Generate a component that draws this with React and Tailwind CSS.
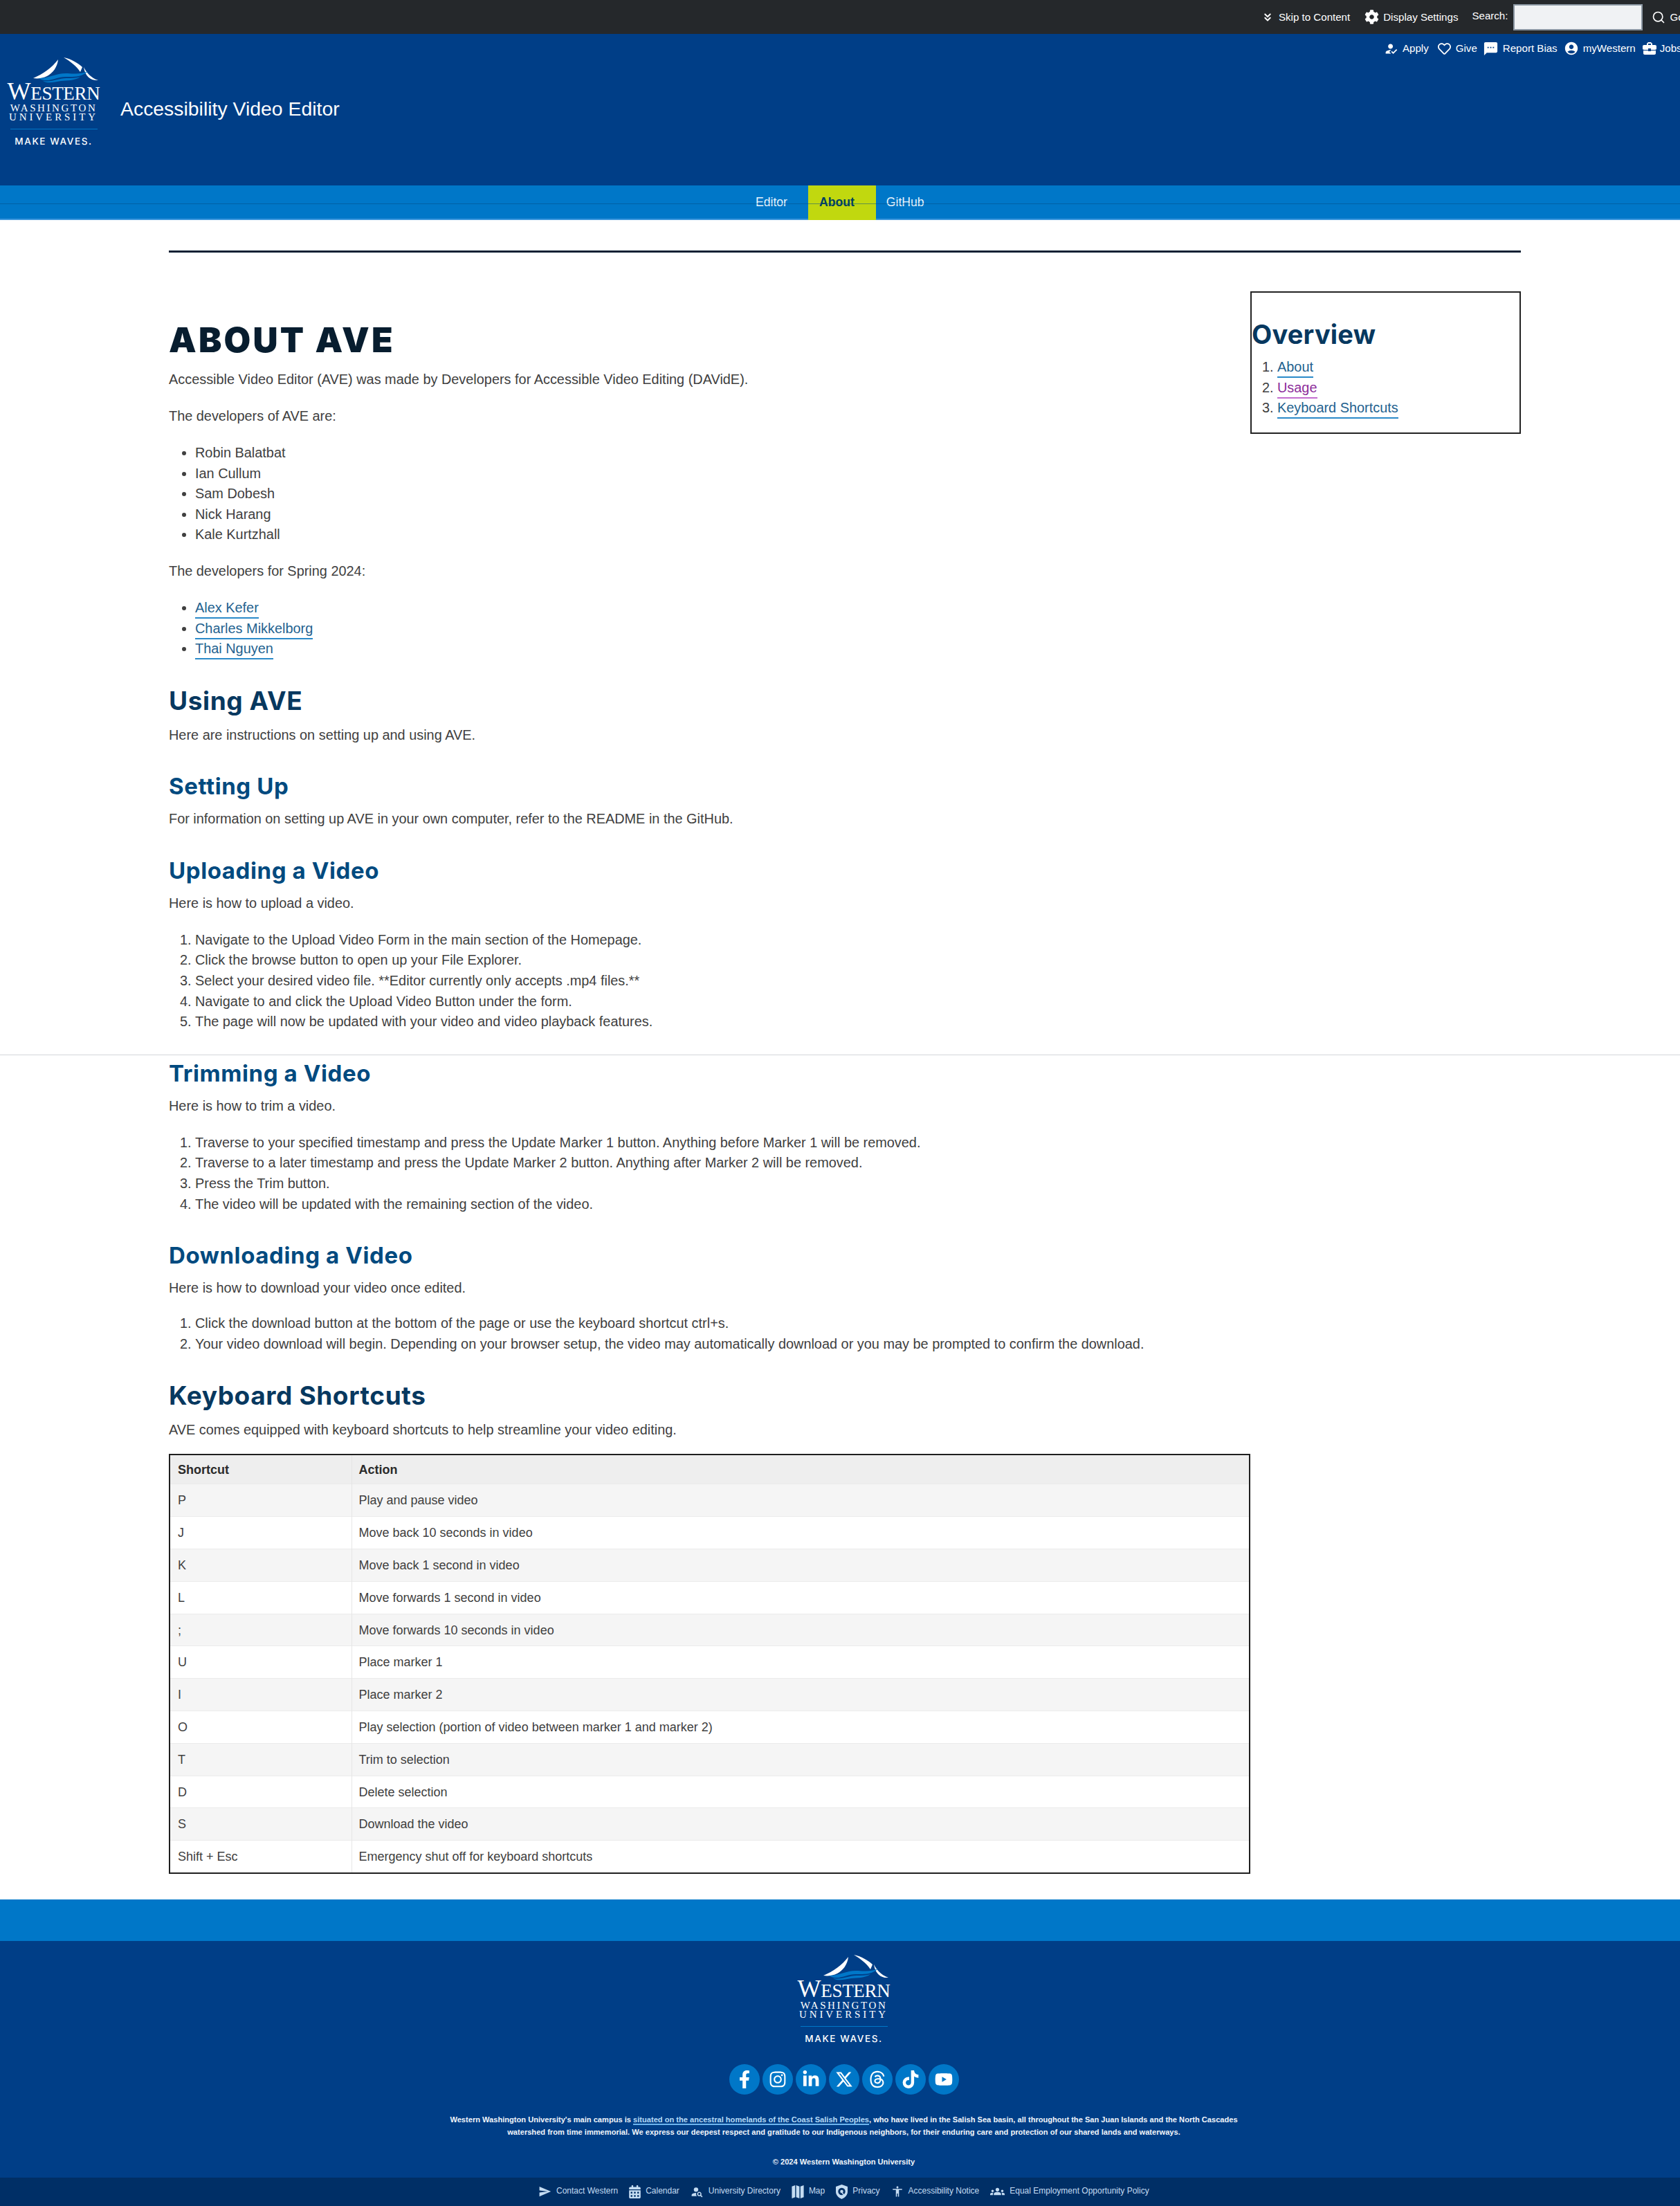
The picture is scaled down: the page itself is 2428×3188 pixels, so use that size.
import { ChevronsDown, Search } from 'lucide-react';
import { FaCog, FaRegHeart, FaFacebookF, FaInstagram, FaLinkedinIn, FaTiktok, FaYoutube, FaCalendarAlt } from 'react-icons/fa';
import { FaXTwitter, FaThreads } from 'react-icons/fa6';
import { MdHowToReg, MdSms, MdAccountCircle, MdBusinessCenter, MdSend, MdPersonSearch, MdAccessibility, MdGroups } from 'react-icons/md';

const shortcuts = [
    ['P', 'Play and pause video'],
    ['J', 'Move back 10 seconds in video'],
    ['K', 'Move back 1 second in video'],
    ['L', 'Move forwards 1 second in video'],
    [';', 'Move forwards 10 seconds in video'],
    ['U', 'Place marker 1'],
    ['I', 'Place marker 2'],
    ['O', 'Play selection (portion of video between marker 1 and marker 2)'],
    ['T', 'Trim to selection'],
    ['D', 'Delete selection'],
    ['S', 'Download the video'],
    ['Shift + Esc', 'Emergency shut off for keyboard shortcuts'],
];

const socials = [FaFacebookF, FaInstagram, FaLinkedinIn, FaXTwitter, FaThreads, FaTiktok, FaYoutube];

const PrivacyIcon = () => (
    <svg viewBox="0 0 18 22" className="w-[17px] h-[21px]" fill="currentColor">
        <path fillRule="evenodd" d="M9 0 L18 3 V11 C18 16 14 20 9 22 C4 20 0 16 0 11 V3 Z M9 5 A5.5 5.5 0 1 0 9 16 A5.5 5.5 0 1 0 9 5 Z" />
        <circle cx="9" cy="10.5" r="2.4" />
        <path d="M10 12 L14 16 L12.5 17 L9 13 Z" />
    </svg>
);

const MapIcon = () => (
    <svg viewBox="0 0 18 22" className="w-[18px] h-[21px]" fill="currentColor">
        <path d="M0 3 L5 1 V19 L0 21 Z" />
        <path d="M6.5 1 L11.5 3 V21 L6.5 19 Z" />
        <path d="M13 3 L18 1 V19 L13 21 Z" />
    </svg>
);

const footerLinks = [
    [MdSend, 'Contact Western', 'w-[19px] text-[24px]'],
    [FaCalendarAlt, 'Calendar', 'w-[17px] text-[19px]'],
    [MdPersonSearch, 'University Directory', 'w-[19px] text-[23px]'],
    [MapIcon, 'Map', 'w-[18px]'],
    [PrivacyIcon, 'Privacy', 'w-[17px]'],
    [MdAccessibility, 'Accessibility Notice', 'w-[18px] text-[26px]'],
    [MdGroups, 'Equal Employment Opportunity Policy', 'w-[21px] text-[26px]'],
];

const Logo = () => (
    <div className="w-[135px] flex flex-col items-center text-white font-['Liberation_Serif',serif]">
        <svg viewBox="0 0 135 37" className="w-[135px] h-[37px] block">
            <path fill="#fff" d="M38 30 C52 24 65 15 74 3 C73 14 66 23 58 27 C52 30 45 31 38 30Z" />
            <path fill="#fff" d="M82 0 C93 2 104 9 109 14 L106 21 C100 12 92 6 82 0Z" />
            <path fill="#fff" d="M111 14 C115 22 122 30 132 33 C122 34 113 28 111 14Z" />
            <path fill="#0077c8" d="M46 30 C62 30 72 22 88 23 C100 24 108 24 117 20 C108 29 96 28 84 28 C72 28 58 38 46 30Z" />
            <path fill="#0077c8" d="M52 34 C66 36 74 30 86 30 C92 30 100 30 106 28 C98 34 86 33 78 34 C68 36 58 38 52 34Z" />
        </svg>
        <div className="h-[28px] leading-[24px] whitespace-nowrap tracking-[-0.3px]">
            <span className="text-[36px]">W</span><span className="text-[27px]">ESTERN</span>
        </div>
        <div className="mt-[1px] h-[13px] leading-[14px] text-[15px] tracking-[2.6px] whitespace-nowrap">WASHINGTON</div>
        <div className="h-[13px] leading-[14px] text-[15px] tracking-[3.9px] whitespace-nowrap">UNIVERSITY</div>
        <div className="mt-[11px] w-[126px] h-[1px] bg-[#0077c8]"></div>
        <div className="mt-[9px] text-[13.5px] leading-[16px] tracking-[1.6px] font-medium font-['Inter',sans-serif] whitespace-nowrap">MAKE WAVES.</div>
    </div>
);

const P = ({ children }) => <p className="mb-[23.4px]">{children}</p>;

const H2 = ({ children }) => (
    <h2 className="mt-[37px] mb-[12px] text-[37px] leading-[46px] font-bold text-[#07385f] font-['Inter',sans-serif] tracking-[0.6px]">{children}</h2>
);

const H3 = ({ children }) => (
    <h3 className="mt-[38px] mb-[12px] text-[33px] leading-[42px] font-bold text-[#004a7f] font-['Inter',sans-serif] tracking-[0.6px]">{children}</h3>
);

const Link = ({ children, visited }) => (
    <a className={visited ? "text-[#8c2c9a] border-b-2 border-[#c46ccf] pb-[3px]" : "text-[#23628f] border-b-2 border-[#2a8ac9] pb-[3px]"}>{children}</a>
);

const Ol = ({ items, className = "mb-[23px]" }) => (
    <ol className={"list-decimal pl-[38px] " + className}>
        {items.map((item, key) => <li key={key}>{item}</li>)}
    </ol>
);

const Ul = ({ items }) => (
    <ul className="list-disc pl-[38px] mb-[23px]">
        {items.map((item, key) => <li key={key}>{item}</li>)}
    </ul>
);

const App = () => {
    return (
        <div className="relative w-[2428px] overflow-hidden bg-white text-[#404040] text-[19.9px] leading-[29.6px] font-['Liberation_Sans',Arial,sans-serif]">
            <div className="h-[49px] bg-[#25282b] text-white text-[15.1px] flex items-center pl-[1823px] whitespace-nowrap [&>*]:shrink-0">
                <ChevronsDown size={18} strokeWidth={2.5} className="mr-[7px]" />
                <span>Skip to Content</span>
                <FaCog className="ml-[21px] mr-[6px] text-[21px]" />
                <span>Display Settings</span>
                <span className="ml-[20px] -translate-y-[2px]">Search:</span>
                <div className="ml-[8px] w-[187px] h-[38px] bg-[#f0f2f4] border-2 border-[#8b97a3]"></div>
                <Search size={20} strokeWidth={2} className="ml-[13px]" />
                <span className="ml-[6px]">Go</span>
            </div>

            <header className="h-[219px] bg-[#003e87] text-white">
                <div className="h-[38px] flex items-center pl-[2000px] pt-[4px] text-[15.1px] whitespace-nowrap [&>*]:shrink-0">
                    <MdHowToReg className="text-[21px] mr-[6px]" />
                    <span>Apply</span>
                    <FaRegHeart className="text-[19px] ml-[13px] mr-[7px]" />
                    <span>Give</span>
                    <MdSms className="text-[23px] ml-[8px] mr-[6px]" />
                    <span>Report Bias</span>
                    <MdAccountCircle className="text-[22px] ml-[9px] mr-[6px]" />
                    <span>myWestern</span>
                    <MdBusinessCenter className="text-[24px] ml-[8px] mr-[3px]" />
                    <span>Jobs</span>
                </div>
                <div className="flex items-start pl-[10px] -mt-[4px]">
                    <Logo />
                    <div className="ml-[29px] mt-[50px] text-[28.4px] leading-[48px]">Accessibility Video Editor</div>
                </div>
            </header>

            <nav className="relative h-[50px] bg-[#0077c8] border-b-2 border-[#3d97dc] flex pl-[1077px] text-[17.6px] text-white">
                <a className="pl-[15px] pr-[30px] leading-[48px] text-[#e8f4fc]">Editor</a>
                <a className="pl-[16px] pr-[31px] leading-[48px] h-[50px] bg-[#c1d80f] text-[#003f5f] font-bold">About</a>
                <a className="pl-[15px] leading-[48px] text-[#e8f4fc]">GitHub</a>
                <div className="absolute left-0 right-0 top-[26px] h-[1px] bg-[#004a82]/50"></div>
            </nav>

            <main className="ml-[244px] w-[1954px] pt-[44px]">
                <div className="h-[3px] bg-[#0d2033]"></div>
                <div className="flex mt-[56px]">
                    <div className="w-[1563px] pt-[40px]">
                        <h1 className="mb-[13px] text-[50px] leading-[60px] font-black text-[#071d2f] font-['Inter',sans-serif] tracking-[3.2px]">ABOUT AVE</h1>
                        <P>Accessible Video Editor (AVE) was made by Developers for Accessible Video Editing (DAVidE).</P>
                        <P>The developers of AVE are:</P>
                        <Ul items={['Robin Balatbat', 'Ian Cullum', 'Sam Dobesh', 'Nick Harang', 'Kale Kurtzhall']} />
                        <P>The developers for Spring 2024:</P>
                        <Ul items={[<Link>Alex Kefer</Link>, <Link>Charles Mikkelborg</Link>, <Link>Thai Nguyen</Link>]} />

                        <H2>Using AVE</H2>
                        <P>Here are instructions on setting up and using AVE.</P>

                        <H3>Setting Up</H3>
                        <P>For information on setting up AVE in your own computer, refer to the README in the GitHub.</P>

                        <H3>Uploading a Video</H3>
                        <P>Here is how to upload a video.</P>
                        <Ol className="mb-[21px]" items={[
                            'Navigate to the Upload Video Form in the main section of the Homepage.',
                            'Click the browse button to open up your File Explorer.',
                            'Select your desired video file. **Editor currently only accepts .mp4 files.**',
                            'Navigate to and click the Upload Video Button under the form.',
                            'The page will now be updated with your video and video playback features.',
                        ]} />

                        <H3>Trimming a Video</H3>
                        <P>Here is how to trim a video.</P>
                        <Ol items={[
                            'Traverse to your specified timestamp and press the Update Marker 1 button. Anything before Marker 1 will be removed.',
                            'Traverse to a later timestamp and press the Update Marker 2 button. Anything after Marker 2 will be removed.',
                            'Press the Trim button.',
                            'The video will be updated with the remaining section of the video.',
                        ]} />

                        <H3>Downloading a Video</H3>
                        <p className="mb-[21.4px]">Here is how to download your video once edited.</p>
                        <Ol items={[
                            'Click the download button at the bottom of the page or use the keyboard shortcut ctrl+s.',
                            'Your video download will begin. Depending on your browser setup, the video may automatically download or you may be prompted to confirm the download.',
                        ]} />

                        <H2>Keyboard Shortcuts</H2>
                        <p className="mb-[19px]">AVE comes equipped with keyboard shortcuts to help streamline your video editing.</p>

                        <table className="w-full border-2 border-[#1f1f1f] border-collapse text-[18px] leading-[24px]">
                            <thead>
                                <tr className="h-[43px] bg-[#eeeeee] text-[#2b2b2b]">
                                    <th className="w-[263px] pl-[11px] text-left font-bold border-r border-[#e4e4e4]">Shortcut</th>
                                    <th className="pl-[10px] text-left font-bold">Action</th>
                                </tr>
                            </thead>
                            <tbody>
                                {shortcuts.map((row, key) => (
                                    <tr key={key} className={key % 2 === 0 ? "h-[46.8px] bg-[#f5f5f5] border-t border-[#ebebeb]" : "h-[46.8px] bg-white border-t border-[#ebebeb]"}>
                                        <td className="pl-[11px] border-r border-[#e6e6e6]">{row[0]}</td>
                                        <td className="pl-[10px]">{row[1]}</td>
                                    </tr>
                                ))}
                            </tbody>
                        </table>
                    </div>

                    <aside className="w-[391px] h-[206px] border-2 border-[#222222] pt-[37px]">
                        <div className="text-[38px] leading-[46px] font-bold text-[#07385f] font-['Inter',sans-serif] tracking-[0.2px]">Overview</div>
                        <ol className="list-decimal pl-[37px] mt-[10px]">
                            <li><Link>About</Link></li>
                            <li><Link visited>Usage</Link></li>
                            <li><Link>Keyboard Shortcuts</Link></li>
                        </ol>
                    </aside>
                </div>
            </main>

            <div className="mt-[37px] h-[60px] bg-[#0077c8]"></div>

            <footer className="bg-[#003e87] text-white">
                <div className="h-[342px] flex flex-col items-center pt-[20px] pl-[11px]">
                    <Logo />
                    <div className="mt-[29px] flex gap-[4px]">
                        {socials.map((Icon, key) => (
                            <div key={key} className="w-[44px] h-[44px] rounded-full bg-[#0077c8] flex items-center justify-center text-[26px]">
                                <Icon />
                            </div>
                        ))}
                    </div>
                    <div className="mt-[27px] w-[1160px] text-center text-[11.1px] leading-[18px] font-bold text-[#f2f6fb]">
                        Western Washington University's main campus is <a className="text-[#b7dcf7] border-b-2 border-[#6db5ee]">situated on the ancestral homelands of the Coast Salish Peoples</a>, who have lived in the Salish Sea basin, all throughout the San Juan Islands and the North Cascades watershed from time immemorial. We express our deepest respect and gratitude to our Indigenous neighbors, for their enduring care and protection of our shared lands and waterways.
                    </div>
                    <div className="mt-[25px] text-[11.1px] leading-[18px] font-bold text-[#f2f6fb]">© 2024 Western Washington University</div>
                </div>
                <div className="h-[41px] bg-[#002f66] flex items-center pl-[778px] gap-[16px] text-[12px] text-[#c4dcf2]">
                    {footerLinks.map(([Icon, label, size], key) => (
                        <a key={key} className="flex items-center gap-[7px] whitespace-nowrap">
                            <span className={"flex justify-center " + size}><Icon /></span>
                            {label}
                        </a>
                    ))}
                </div>
            </footer>

            <div className="absolute left-0 right-0 top-[1524px] h-[1px] bg-[#d2d6da]"></div>
        </div>
    );
};

export default App;
